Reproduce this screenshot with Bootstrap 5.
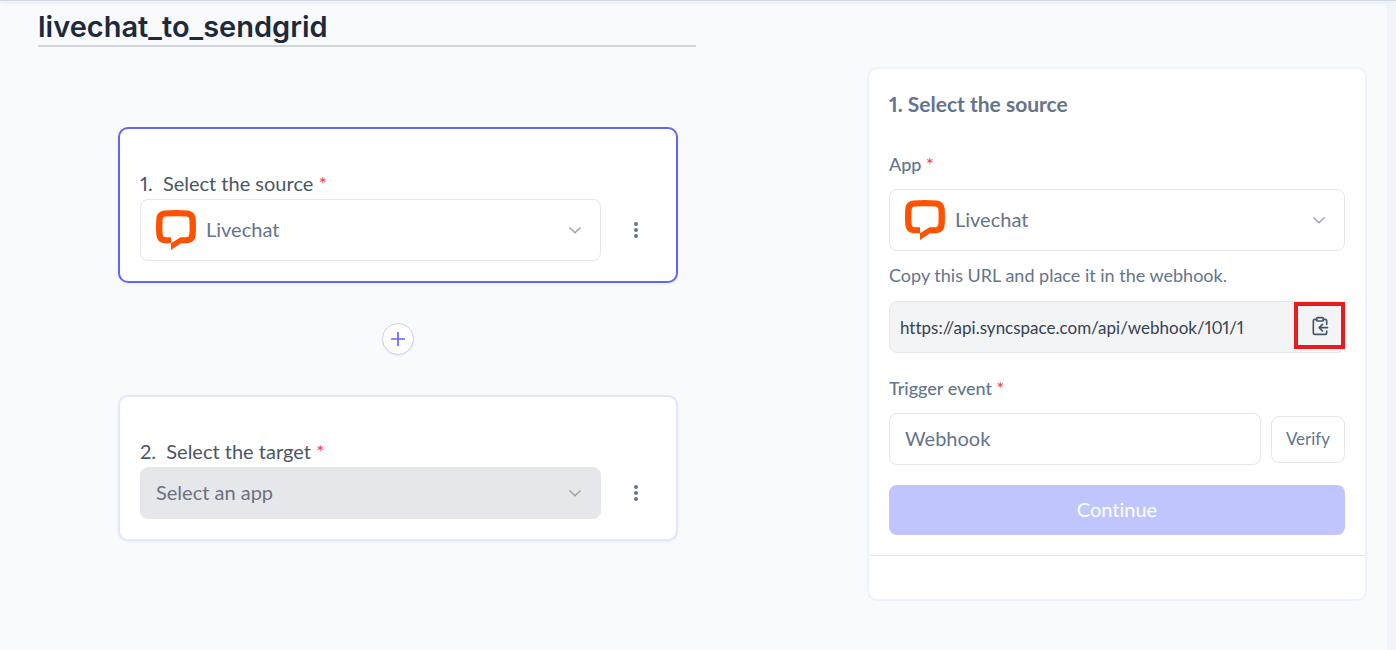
<!DOCTYPE html>
<html lang="en">
<head>
<meta charset="utf-8">
<meta name="viewport" content="width=device-width, initial-scale=1">
<title>livechat_to_sendgrid</title>
<link href="https://cdn.jsdelivr.net/npm/bootstrap@5.3.0/dist/css/bootstrap.min.css" rel="stylesheet">
<style>
  :root { --ink: #64748b; --line: #e5e7eb; --accent: #6366f1; }
  body { font-family: Lato, sans-serif; font-size: 20px; line-height: 30px; color: var(--ink); background: #f8fafc; font-variant-numeric: proportional-nums; font-variant-ligatures: none; }
  input, select, button { font-variant-numeric: inherit; font-variant-ligatures: inherit; }
  .top-line { height: 1px; background: #cfd8e3; box-shadow: 0 1px 4px rgba(90, 60, 80, .25); }
  .workspace { min-height: calc(100vh - 1px); padding: 6px 20px 48px 38px; border-right: 9px solid #f0f4f9; }
  .flow-title { width: 658px; max-width: 100%; height: 40px; padding: 0; border: 0; border-bottom: 2px solid #d1d5db; background: none; font-family: Inter, sans-serif; font-size: 29px; font-weight: 600; color: #1e293b; outline: 0; }
  .board { display: grid; grid-template-columns: 720fr 500fr; column-gap: 109px; align-items: start; padding-top: 20px; }
  .steps { padding-top: 60px; gap: 40px; }
  .step { width: 100%; max-width: 560px; padding: 40px 20px 20px; border: 2px solid #e0e7ff; border-radius: 10px; background: #fff; box-shadow: 0 1px 3px rgba(15, 23, 42, .06); }
  .step.current { border-color: var(--accent); }
  .step label { display: block; line-height: 28px; padding-bottom: 2px; color: #4b5563; white-space: pre; }
  .req { color: #ef4444; }
  .picker { height: 62px; padding: 0 15px; gap: 10px; border: 1px solid var(--line); border-radius: 8px; background: #fff; }
  .picker.off { height: 52px; background: #e5e7eb; }
  .picker .form-select { min-width: 0; padding: 0 24px 2px 0; border: 0; border-radius: 0; background-color: transparent; color: var(--ink); font-size: 20px; line-height: 30px; box-shadow: none; opacity: 1;
    background-position: right 3px center; background-size: 14px 14px;
    background-image: url("data:image/svg+xml,%3Csvg xmlns='http://www.w3.org/2000/svg' viewBox='0 0 14 14'%3E%3Cpath d='M1.5 4.5 7 9.8l5.500-5.300' fill='none' stroke='%239ca3af' stroke-width='1.500'/%3E%3C/svg%3E"); }
  .picker.off .form-select { color: #6b7280; }
  .dots { width: 40px; height: 40px; margin-left: 15px; padding: 0; color: var(--ink); border: 0; }
  .add { width: 32px; height: 32px; padding: 0; border: 1px solid #c7d2fe; background: #fff; color: var(--accent); box-shadow: 0 1px 2px rgba(15, 23, 42, .06); }
  .panel { border: 2px solid #edf2ff; border-radius: 10px; background: #fff; }
  .panel-main { padding: 20px; border-bottom: 1px solid var(--line); }
  .panel h2 { margin: 0 0 31px; font-size: 21px; line-height: 30px; font-weight: 700; }
  .panel label { display: block; margin-bottom: 11px; font-size: 18px; line-height: 28px; font-weight: 500; }
  .hint { margin: 10px 0 12px; font-size: 18px; line-height: 28px; }
  .url-box { height: 52px; margin-bottom: 21px; border: 1px solid var(--line); border-radius: 8px; background: #f3f4f6; }
  .url-box input { min-width: 0; height: 50px; padding: 0 10px; border: 0; background: none; color: #374151; font-size: 17px; outline: 0; }
  .copy { flex: none; width: 51px; height: 47px; margin-right: -1px; padding: 0; border: 4px solid #e81b1e; border-radius: 0; color: #475569; }
  .event-row { gap: 10px; }
  .event-input { height: 52px; padding: 0 15px 2px; border: 1px solid var(--line); border-radius: 8px; color: var(--ink); font-size: 20px; }
  .verify { flex: none; width: 74px; height: 47px; padding: 0; border: 1px solid var(--line); border-radius: 8px; color: var(--ink); font-size: 17px; }
  .go, .go:disabled { height: 50px; margin-top: 20px; padding: 0 0 2px; border: 0; border-radius: 8px; background: #c0c5fd; color: #fff; font-size: 20px; opacity: 1; }
  .panel-foot { height: 43px; }
</style>
</head>
<body>
<svg width="0" height="0" class="position-absolute" aria-hidden="true">
  <symbol id="livechat" viewBox="0 0 40 40"><path fill="#ff5100" fill-rule="evenodd" d="M15 40 25 33.300H31C36 33 39.200 30 39.600 25.500Q40.400 16.500 39.600 8C39 3.500 36.200 1 31.500.4Q20-.4 8.500.4C3.800 1 .9 3.500.4 8Q-.4 16.500.4 25.500C.9 30 4 33 9 33.300H15ZM15 33.300V27.300H9.500Q6.900 27 6.700 24.500Q6.100 16.500 6.700 9Q7 6.800 9.500 6.600Q20 6 30.500 6.600Q33 6.800 33.300 9Q33.900 16.500 33.300 24.500Q33.100 27 30.500 27.300H24.500Z"/></symbol>
  <symbol id="dots" viewBox="0 0 20 20"><g fill="currentColor"><circle cx="10" cy="4" r="2"/><circle cx="10" cy="10" r="2"/><circle cx="10" cy="16" r="2"/></g></symbol>
</svg>
<div class="top-line"></div>
<main class="workspace">
  <input class="flow-title d-block" type="text" value="livechat_to_sendgrid" aria-label="Workflow name">
  <div class="board">
    <section class="steps d-flex flex-column align-items-center">
      <div class="step current">
        <label for="source">1.  Select the source <span class="req">*</span></label>
        <div class="d-flex align-items-center">
          <div class="picker d-flex align-items-center flex-grow-1">
            <svg class="flex-shrink-0" width="40" height="40" aria-hidden="true"><use href="#livechat"/></svg>
            <select class="form-select" id="source"><option>Livechat</option></select>
          </div>
          <button type="button" class="btn dots d-flex align-items-center justify-content-center" aria-label="Source options"><svg width="20" height="20"><use href="#dots"/></svg></button>
        </div>
      </div>
      <button type="button" class="btn add rounded-circle d-flex align-items-center justify-content-center" aria-label="Add step"><svg width="14" height="14" viewBox="0 0 14 14"><path d="M7 0v14M0 7h14" fill="none" stroke="currentColor" stroke-width="1.700"/></svg></button>
      <div class="step">
        <label for="target">2.  Select the target <span class="req">*</span></label>
        <div class="d-flex align-items-center">
          <div class="picker off d-flex align-items-center flex-grow-1">
            <select class="form-select" id="target" disabled><option>Select an app</option></select>
          </div>
          <button type="button" class="btn dots d-flex align-items-center justify-content-center" aria-label="Target options"><svg width="20" height="20"><use href="#dots"/></svg></button>
        </div>
      </div>
    </section>
    <aside class="panel">
      <form class="panel-main">
        <h2>1. Select the source</h2>
        <label for="app">App <span class="req">*</span></label>
        <div class="picker d-flex align-items-center">
          <svg class="flex-shrink-0" width="40" height="40" aria-hidden="true"><use href="#livechat"/></svg>
          <select class="form-select" id="app"><option>Livechat</option></select>
        </div>
        <p class="hint">Copy this URL and place it in the webhook.</p>
        <div class="url-box d-flex align-items-start">
          <input class="flex-grow-1" type="text" readonly value="https://api.syncspace.com/api/webhook/101/1" aria-label="Webhook URL">
          <button type="button" class="btn copy d-flex align-items-center justify-content-center" aria-label="Copy URL"><svg width="20" height="20" viewBox="0 0 24 24" fill="none" stroke="currentColor" stroke-width="2" stroke-linecap="round" stroke-linejoin="round"><rect x="8" y="2" width="8" height="4" rx="1"/><path d="M8 4H6a2 2 0 0 0-2 2v14a2 2 0 0 0 2 2h12a2 2 0 0 0 2-2v-2M16 4h2a2 2 0 0 1 2 2v4M21 14H11M15 10l-4 4 4 4"/></svg></button>
        </div>
        <label for="event">Trigger event <span class="req">*</span></label>
        <div class="event-row d-flex align-items-center">
          <input class="form-control event-input" id="event" type="text" value="Webhook">
          <button type="button" class="btn verify">Verify</button>
        </div>
        <button type="submit" class="btn go w-100 d-block" disabled>Continue</button>
      </form>
      <div class="panel-foot"></div>
    </aside>
  </div>
</main>
<script src="https://cdn.jsdelivr.net/npm/bootstrap@5.3.0/dist/js/bootstrap.bundle.min.js"></script>
</body>
</html>
